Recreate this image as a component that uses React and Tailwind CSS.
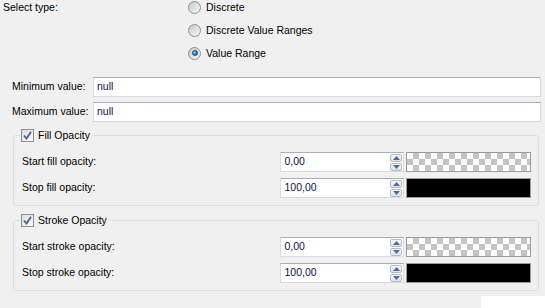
import React from "react";

function Radio({ checked, label }) {
  return (
    <div className="flex h-[14px] items-center gap-[5px] leading-[14px]">
      <span className="relative flex h-[13px] w-[13px] items-center justify-center rounded-full border border-[#8f9090] bg-[linear-gradient(135deg,#c9c9c9,#f6f6f6)]">
        {checked && (
          <span className="h-[6px] w-[6px] rounded-full border border-[#1b4f86] bg-[radial-gradient(circle_at_35%_35%,#8fd0f6,#2a79c2_60%,#1a4f8a)]" />
        )}
      </span>
      <span>{label}</span>
    </div>
  );
}

function TextField({ label, value }) {
  return (
    <div className="flex h-[20px] items-center pl-[12px] pr-[4px]">
      <span className="w-[81px]">{label}</span>
      <div className="flex h-[20px] flex-1 items-center border border-[#d6dae1] border-t-[#abadb3] bg-white pl-[3px] text-[#10104a]">
        {value}
      </div>
    </div>
  );
}

function SpinArrow({ up }) {
  return (
    <span className="flex h-[8px] w-[12px] items-center justify-center rounded-[2px] border border-[#b6bcc6] bg-[linear-gradient(#f7f8fa,#dde1e7)]">
      <svg width="7" height="4" viewBox="0 0 7 4">
        <path d={up ? "M0 4 L3.5 0 L7 4 Z" : "M0 0 L3.5 4 L7 0 Z"} fill="#4d6a9c" />
      </svg>
    </span>
  );
}

function OpacityRow({ label, value, solid }) {
  return (
    <div className="flex h-[20px] items-center">
      <span className="w-[259px]">{label}</span>
      <div className="flex h-[20px] w-[124px] items-center border border-[#d6dae1] border-t-[#abadb3] bg-white pl-[3px] pr-[1px] text-[#10104a]">
        <span className="flex-1">{value}</span>
        <div className="flex flex-col gap-[1px]">
          <SpinArrow up />
          <SpinArrow />
        </div>
      </div>
      <div
        className={
          solid
            ? "ml-[2px] h-[20px] w-[125px] border border-[#9a9a9a] bg-black"
            : "ml-[2px] h-[20px] w-[125px] border border-[#9a9a9a] bg-[repeating-conic-gradient(#c4c4c4_0_25%,#ffffff_0_50%)] bg-[length:12px_12px]"
        }
      />
    </div>
  );
}

function CheckBox() {
  return (
    <span className="flex h-[13px] w-[13px] items-center justify-center border border-[#8e8f8f] bg-[linear-gradient(135deg,#dcdcdc,#fafafa)]">
      <svg width="9" height="9" viewBox="0 0 9 9">
        <path d="M1 4.5 L3.5 7.5 L8 0.8" fill="none" stroke="#4a5f97" strokeWidth="1.8" />
      </svg>
    </span>
  );
}

function Group({ title, rows, className }) {
  return (
    <div className={"relative ml-[13px] mr-[6px] rounded-[3px] border border-[#d5dfe5] pl-[8px] pr-[7px] pt-[16px] " + className}>
      <div className="absolute left-[6px] top-[-8px] flex items-center gap-[4px] bg-[#f0f0f0] pl-[1px] pr-[3px]">
        <CheckBox />
        <span>{title}</span>
      </div>
      <div className="flex flex-col gap-[6px]">
        {rows.map((r) => (
          <OpacityRow key={r.label} {...r} />
        ))}
      </div>
    </div>
  );
}

export default function App() {
  return (
    <div className="h-[308px] w-[545px] overflow-hidden bg-[#f0f0f0] font-['Liberation_Sans',Arial,sans-serif] text-[10.5px] text-black">
      <div className="flex pl-[3px]">
        <span className="w-[185px] leading-[14px]">Select type:</span>
        <div className="flex flex-col gap-[9px]">
          <Radio label="Discrete" />
          <Radio label="Discrete Value Ranges" />
          <Radio label="Value Range" checked />
        </div>
      </div>

      <div className="mt-[17px] flex flex-col gap-[5px]">
        <TextField label="Minimum value:" value="null" />
        <TextField label="Maximum value:" value="null" />
      </div>

      <Group
        title="Fill Opacity"
        className="mt-[13px] pb-[7px]"
        rows={[
          { label: "Start fill opacity:", value: "0,00" },
          { label: "Stop fill opacity:", value: "100,00", solid: true },
        ]}
      />

      <Group
        title="Stroke Opacity"
        className="mt-[14px] pb-[7px]"
        rows={[
          { label: "Start stroke opacity:", value: "0,00" },
          { label: "Stop stroke opacity:", value: "100,00", solid: true },
        ]}
      />

      <div className="mt-[5px] flex justify-end">
        <div className="h-[14px] w-[64px] bg-white" />
      </div>
    </div>
  );
}
